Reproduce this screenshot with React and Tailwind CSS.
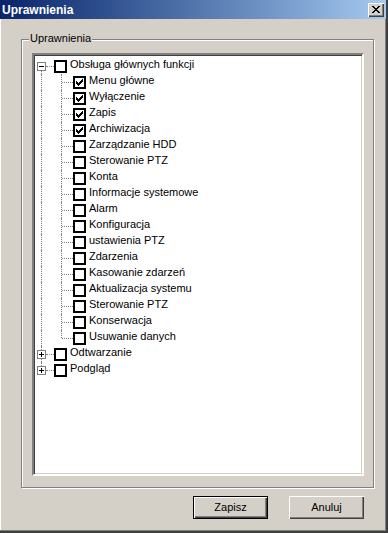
import React from 'react';

const font = { fontFamily: '"Liberation Sans", Arial, sans-serif' };

const items = [
  { label: 'Menu główne', checked: true },
  { label: 'Wyłączenie', checked: true },
  { label: 'Zapis', checked: true },
  { label: 'Archiwizacja', checked: true },
  { label: 'Zarządzanie HDD' },
  { label: 'Sterowanie PTZ' },
  { label: 'Konta' },
  { label: 'Informacje systemowe' },
  { label: 'Alarm' },
  { label: 'Konfiguracja' },
  { label: 'ustawienia PTZ' },
  { label: 'Zdarzenia' },
  { label: 'Kasowanie zdarzeń' },
  { label: 'Aktualizacja systemu' },
  { label: 'Sterowanie PTZ' },
  { label: 'Konserwacja' },
  { label: 'Usuwanie danych' },
];

const dotV = 'border-l border-dotted border-[#808080]';

const Check = ({ checked }) => (
  <div className="flex h-[13px] w-[13px] shrink-0 items-center justify-center border-2 border-black bg-white">
    {checked && (
      <svg width="9" height="9" viewBox="0 0 9 9" shapeRendering="crispEdges">
        <rect x="1" y="3" width="1" height="3" fill="#000" />
        <rect x="2" y="4" width="1" height="3" fill="#000" />
        <rect x="3" y="5" width="1" height="3" fill="#000" />
        <rect x="4" y="4" width="1" height="3" fill="#000" />
        <rect x="5" y="3" width="1" height="3" fill="#000" />
        <rect x="6" y="2" width="1" height="3" fill="#000" />
        <rect x="7" y="1" width="1" height="3" fill="#000" />
      </svg>
    )}
  </div>
);

const Expander = ({ open }) => (
  <div className="h-[9px] w-[9px] shrink-0 border border-[#808080] bg-white">
    <svg width="7" height="7" viewBox="0 0 7 7" shapeRendering="crispEdges">
      <rect x="1" y="3" width="5" height="1" fill="#000" />
      {!open && <rect x="3" y="1" width="1" height="5" fill="#000" />}
    </svg>
  </div>
);

const Label = ({ children }) => (
  <span className="ml-[3px] whitespace-nowrap pb-[3px] text-[11px] leading-[13px] text-black">{children}</span>
);

const RootRow = ({ label, open, first, last }) => (
  <div className="flex h-[16px] items-center">
    <div className="flex h-full w-[20px] shrink-0">
      <div className="w-[3px]" />
      <div className="flex w-[9px] flex-col items-center">
        <div className={`flex-1 ${first ? '' : dotV}`} />
        <Expander open={open} />
        <div className={`flex-1 ${last ? '' : dotV}`} />
      </div>
      <div className="flex flex-1 items-center">
        <div className="w-full border-t border-dotted border-[#808080]" />
      </div>
    </div>
    <Check />
    <Label>{label}</Label>
  </div>
);

const ChildRow = ({ label, checked, last }) => (
  <div className="flex h-[16px] items-center">
    <div className="flex h-full w-[20px] shrink-0">
      <div className="w-[3px]" />
      <div className="flex w-[9px] justify-center">
        <div className={`h-full ${dotV}`} />
      </div>
    </div>
    <div className="flex h-full w-[19px] shrink-0">
      <div className="w-[7px]" />
      <div className={`${last ? 'h-[8px]' : 'h-full'} ${dotV}`} />
      <div className="flex flex-1 items-center">
        <div className="w-full border-t border-dotted border-[#808080]" />
      </div>
    </div>
    <Check checked={checked} />
    <Label>{label}</Label>
  </div>
);

const Button = ({ children, primary }) => (
  <button
    className={`flex h-[23px] w-[75px] items-center justify-center bg-[#d4d0c8] text-[11px] text-black ${
      primary
        ? 'border border-black shadow-[inset_1px_1px_0_#fff,inset_-1px_-1px_0_#404040,inset_-2px_-2px_0_#808080]'
        : 'shadow-[inset_1px_1px_0_#fff,inset_-1px_-1px_0_#404040,inset_-2px_-2px_0_#808080]'
    }`}
  >
    {children}
  </button>
);

export default function App() {
  return (
    <div
      style={font}
      className="flex h-[533px] w-[388px] flex-col border-r-2 border-b-2 border-r-[#404040] border-b-[#404040] bg-[#d4d0c8] shadow-[inset_-1px_-1px_0_#808080,inset_1px_0_0_#fff]"
    >
      {/* title bar */}
      <div className="flex h-[19px] shrink-0 items-center justify-between bg-gradient-to-r from-[#0a246a] to-[#a6caf0] pl-[2px] pr-[2px]">
        <span className="text-[12px] font-bold leading-none text-white">Uprawnienia</span>
        <div className="flex h-[14px] w-[16px] items-center justify-center bg-[#d4d0c8] shadow-[inset_1px_1px_0_#fff,inset_-1px_-1px_0_#404040,inset_-2px_-2px_0_#808080]">
          <svg width="8" height="7" viewBox="0 0 8 7" shapeRendering="crispEdges">
            <path d="M0 0h2v1h-2zM6 0h2v1h-2zM1 1h2v1h-2zM5 1h2v1h-2zM2 2h4v1h-4zM3 3h2v1h-2zM2 4h4v1h-4zM1 5h2v1h-2zM5 5h2v1h-2zM0 6h2v1h-2zM6 6h2v1h-2z" fill="#000" />
          </svg>
        </div>
      </div>

      <div className="flex flex-1 flex-col pl-[21px] pt-[20px]">
        {/* group box */}
        <div className="relative h-[449px] w-[353px] border border-[#808080] pb-[11px] pl-[10px] pr-[9px] pt-[13px] shadow-[1px_1px_0_#fff,inset_1px_1px_0_#fff]">
          <span className="absolute left-[7px] top-[-8px] bg-[#d4d0c8] px-[1px] text-[11px] leading-[13px] text-black">
            Uprawnienia
          </span>
          {/* tree */}
          <div className="h-full w-full border-2 border-t-[#808080] border-l-[#808080] border-b-white border-r-white bg-white pt-[3px] shadow-[inset_1px_1px_0_#404040,inset_-1px_-1px_0_#d4d0c8]">
            <RootRow label="Obsługa głównych funkcji" open first />
            {items.map((it, i) => (
              <ChildRow key={i} label={it.label} checked={it.checked} last={i === items.length - 1} />
            ))}
            <RootRow label="Odtwarzanie" />
            <RootRow label="Podgląd" last />
          </div>
        </div>

        <div className="mt-[8px] flex justify-end gap-[21px] pr-[22px]">
          <Button primary>Zapisz</Button>
          <Button>Anuluj</Button>
        </div>
      </div>
    </div>
  );
}
